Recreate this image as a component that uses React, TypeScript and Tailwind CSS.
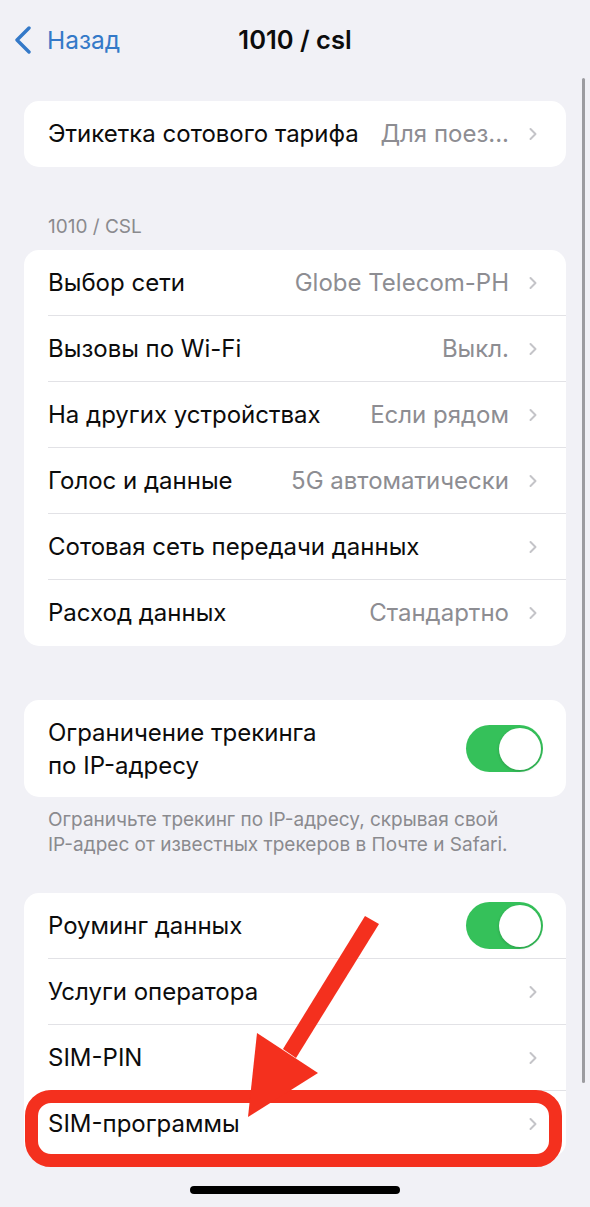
import { ChevronRight } from 'lucide-react';

type Row = {
  label: string;
  value?: string;
  toggle?: boolean;
};

const networkRows: Row[] = [
  { label: 'Выбор сети', value: 'Globe Telecom-PH' },
  { label: 'Вызовы по Wi-Fi', value: 'Выкл.' },
  { label: 'На других устройствах', value: 'Если рядом' },
  { label: 'Голос и данные', value: '5G автоматически' },
  { label: 'Сотовая сеть передачи данных' },
  { label: 'Расход данных', value: 'Стандартно' },
];

const simRows: Row[] = [
  { label: 'Роуминг данных', toggle: true },
  { label: 'Услуги оператора' },
  { label: 'SIM-PIN' },
  { label: 'SIM-программы' },
];

const Toggle = () => (
  <div className="w-[77px] h-[47px] rounded-full bg-[#35c15a] flex items-center justify-end px-[2.5px] shrink-0">
    <div className="w-[42px] h-[42px] rounded-full bg-white shadow-[0_1px_3px_rgba(0,0,0,0.2)]" />
  </div>
);

const Chevron = () => <ChevronRight className="w-[20px] h-[24px] text-[#c4c4c8] shrink-0" strokeWidth={2.4} />;

const SettingsRow = ({ row, last }: { row: Row; last: boolean }) => (
  <div className="h-[66px] pl-[24px] flex items-stretch">
    <div className={`flex-1 flex items-center pr-[23px] ${last ? '' : 'border-b border-[#e2e2e6]'}`}>
      <span className="flex-1 text-[24px] text-[#0c0c0c] whitespace-nowrap">{row.label}</span>
      {row.toggle ? (
        <Toggle />
      ) : (
        <>
          {row.value && <span className="text-[24px] text-[#8d8d92] mr-[14px] whitespace-nowrap">{row.value}</span>}
          <Chevron />
        </>
      )}
    </div>
  </div>
);

const App = () => {
  return (
    <div
      className="relative w-[590px] h-[1207px] bg-[#f1f1f6] overflow-hidden"
      style={{ fontFamily: 'Inter, "Noto Sans", sans-serif' }}
    >
      {/* Nav bar */}
      <div className="relative h-[80px] flex items-center">
        <div className="flex items-center pl-[14px] text-[#3479c8]">
          <svg width="18" height="28" viewBox="0 0 18 28" fill="none">
            <path d="M15 2 L3 14 L15 26" stroke="currentColor" strokeWidth="3.4" strokeLinecap="round" strokeLinejoin="round" />
          </svg>
          <span className="ml-[15px] text-[24.5px]">Назад</span>
        </div>
        <div className="absolute left-0 right-0 text-center text-[25.5px] font-semibold text-[#0c0c0c] pointer-events-none">
          1010 / csl
        </div>
      </div>

      <div className="px-[24px]">
        {/* Plan label */}
        <div className="mt-[21px] bg-white rounded-[15px] h-[66px] pl-[24px] pr-[23px] flex items-center">
          <span className="flex-1 text-[24px] text-[#0c0c0c] whitespace-nowrap">Этикетка сотового тарифа</span>
          <span className="text-[24px] text-[#8d8d92] mr-[14px] whitespace-nowrap">Для поез...</span>
          <Chevron />
        </div>

        {/* Carrier section */}
        <div className="pt-[50px] pb-[13px] pl-[24px] text-[19px] leading-[20px] text-[#8a8a8e]">1010 / CSL</div>
        <div className="bg-white rounded-[15px] overflow-hidden">
          {networkRows.map((row, i) => (
            <SettingsRow key={row.label} row={row} last={i === networkRows.length - 1} />
          ))}
        </div>

        {/* IP tracking */}
        <div className="mt-[54px] bg-white rounded-[15px] h-[97px] pl-[24px] pr-[23px] flex items-center">
          <span className="flex-1 text-[24px] leading-[33px] text-[#0c0c0c]">
            Ограничение трекинга
            <br />
            по IP-адресу
          </span>
          <Toggle />
        </div>
        <div className="pt-[10px] pb-[36px] pl-[24px] pr-[10px] text-[19px] leading-[25px] text-[#8a8a8e] whitespace-nowrap">
          Ограничьте трекинг по IP-адресу, скрывая свой
          <br />
          IP-адрес от известных трекеров в Почте и Safari.
        </div>

        {/* SIM section */}
        <div className="bg-white rounded-[15px] overflow-hidden">
          {simRows.map((row, i) => (
            <SettingsRow key={row.label} row={row} last={i === simRows.length - 1} />
          ))}
        </div>
      </div>

      {/* Home indicator */}
      <div className="flex justify-center mt-[29px]">
        <div className="w-[210px] h-[8px] rounded-full bg-black" />
      </div>

      {/* Scroll indicator */}
      <div className="absolute left-[582px] top-[78px] w-[3px] h-[1005px] rounded-full bg-[#9c9ca0]" />

      {/* Red highlight around SIM-программы */}
      <div className="absolute left-[25px] top-[1090px] w-[537px] h-[77px] rounded-[26px] border-[13px] border-[#f4301e]" />

      {/* Red arrow */}
      <svg className="absolute left-0 top-0 pointer-events-none" width="590" height="1207" viewBox="0 0 590 1207">
        <polygon points="365,916 379,924 296,1058 283,1049" fill="#f4301e" />
        <polygon points="257,1033 318,1073 248,1117" fill="#f4301e" />
      </svg>
    </div>
  );
};

export default App;
